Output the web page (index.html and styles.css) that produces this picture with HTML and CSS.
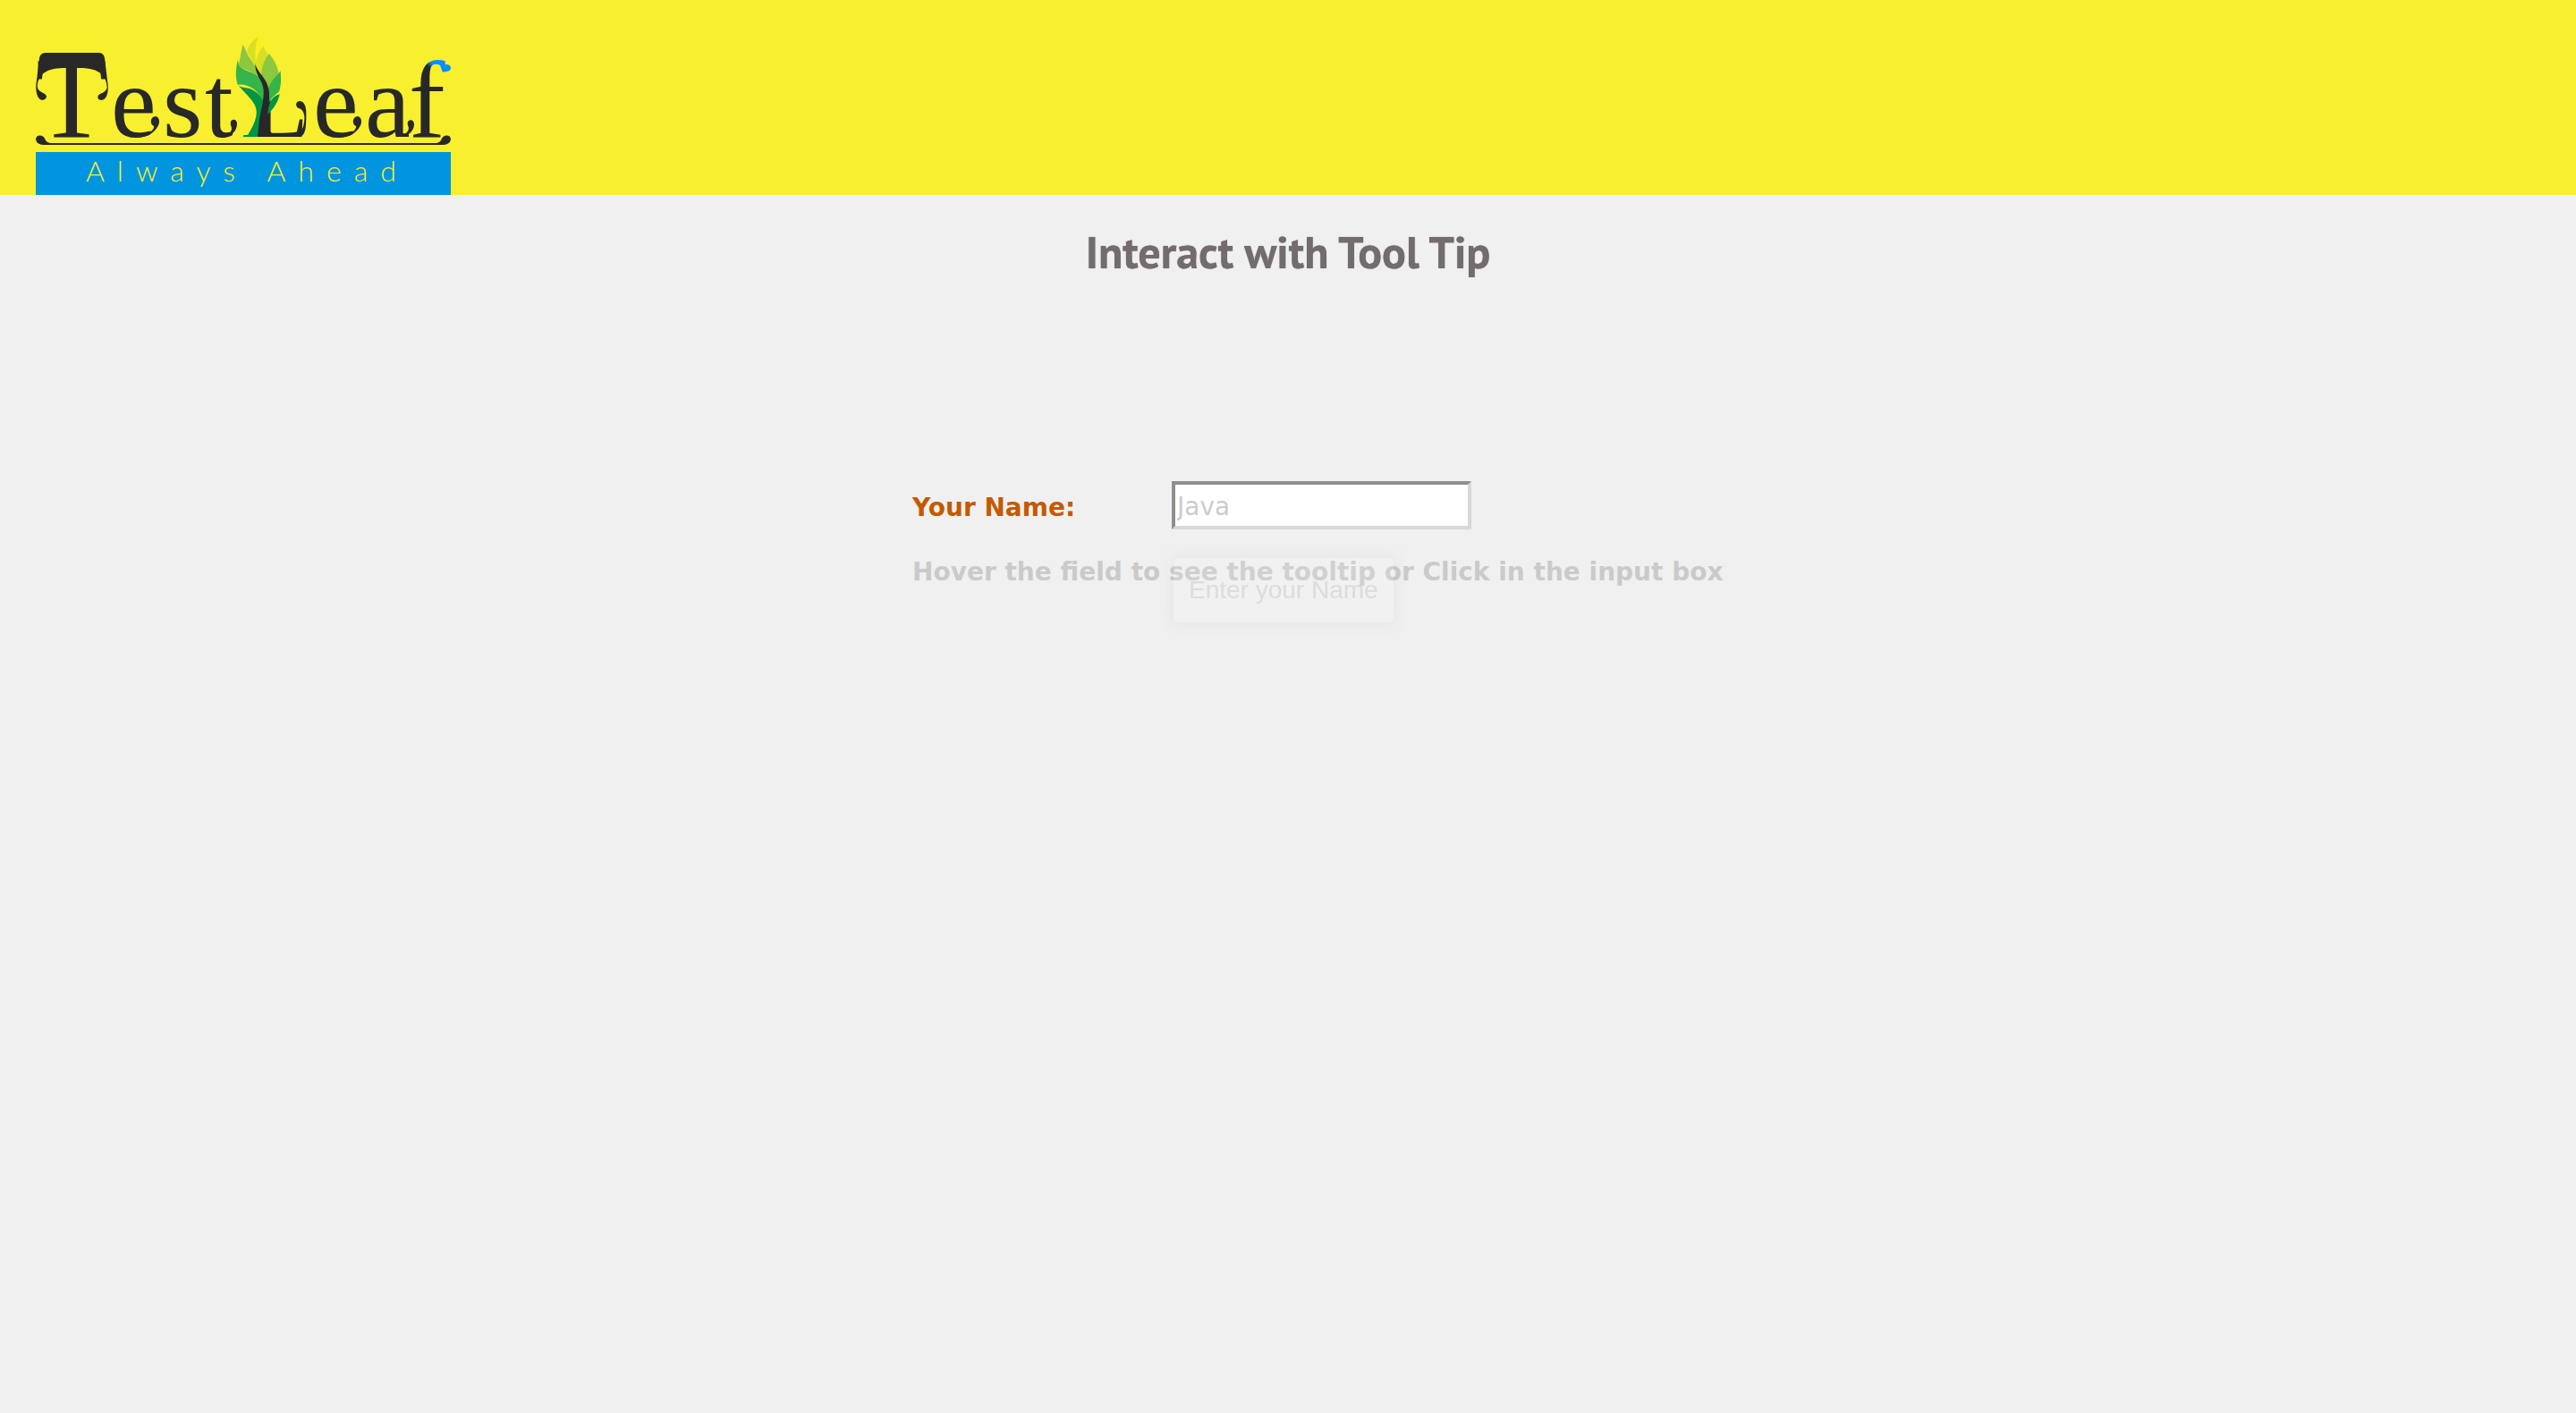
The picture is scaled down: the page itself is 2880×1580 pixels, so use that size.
FILE: index.html
```html
<!DOCTYPE html>
<html lang="en">
<head>
<meta charset="utf-8">
<title>Interact with Tool Tip</title>
<link rel="stylesheet" href="styles.css">
</head>
<body>
<header class="banner">
  <svg class="logo" viewBox="40 42 464 176" role="img" aria-label="TestLeaf, Always Ahead">
    <defs>
      <linearGradient id="tip" gradientUnits="userSpaceOnUse" x1="484" y1="80" x2="488" y2="76">
        <stop offset="0" stop-color="#282828"/>
        <stop offset="1" stop-color="#0090ff"/>
      </linearGradient>
    </defs>
    <g class="wordmark">
      <text class="initial" x="80" y="153" text-anchor="middle">T</text>
      <text x="124" y="153">e</text>
      <text x="182" y="153">s</text>
      <text x="229" y="153">t</text>
      <text class="leaf-l" x="281" y="153">L</text>
      <text x="350" y="153">e</text>
      <text x="408" y="153">a</text>
      <text class="leaf-f" x="457" y="153" fill="url(#tip)">f</text>
    </g>
    <!-- canopy and curls over the initial -->
    <path class="ink" transform="translate(30 40) scale(.3333)" d="M62 57H243Q258 58 261 75L272 165C274 190 268 216 250 216C240 216 236 208 239 202C242 192 262 195 269 175C268 135 245 106 171 108H132C70 108 38 125 35 170C38 192 60 188 66 202C66 210 60 216 51 216C35 212 30 190 31 165L42 75Q45 58 62 57z"/>
    <!-- ball ends of the letters -->
    <g class="ink">
      <path d="M150 152C164 152 173 146 172 141C167 139 168 130 174 130C179 131 179 138 176 142C172 149 163 155 150 153z"/>
      <path d="M376 152C390 152 399 146 398 141C393 139 394 130 400 130C405 131 405 138 402 142C398 149 389 155 376 153z"/>
      <path d="M246 152C257 151 261 146 258 140C256 132 265 132 265 138C265 146 259 154 248 153z"/>
      <path d="M444 152C454 151 459 146 456 140C454 133 463 132 463 139C463 146 456 154 446 153z"/>
    </g>
    <!-- tree -->
    <g transform="translate(240 30) scale(.3333)">
      <path fill="#009444" d="M73 186C90 215 134 245 139 275C146 310 120 345 112 362L96 364V369H146L163 280L164 250C155 225 125 205 100 204C85 202 76 196 73 186z"/>
      <path fill="#35b44a" d="M78 109C68 150 71 180 78 194C110 190 145 210 163 250L170 220C168 185 150 160 115 150C95 143 78 135 78 109z"/>
      <path fill="#8dc63f" d="M94 60C88 85 86 105 80 130C95 145 130 147 155 175C146 150 135 130 125 115C108 95 104 72 94 60z"/>
      <path fill="#fcee21" d="M146 34C130 70 134 100 138 115C145 90 170 75 166 60C164 50 166 45 164 36z"/>
      <path fill="#d7df23" d="M147 33C120 50 110 70 109 85C118 102 128 115 137 128C136 90 134 60 147 33z"/>
      <path fill="#d7df23" d="M164 65C150 80 138 105 138 125C142 145 150 150 158 160C165 125 182 120 181 105C180 85 168 80 164 65z"/>
      <path fill="#8dc63f" d="M182 90C165 115 155 140 157 165C160 185 172 195 181 210C190 180 214 165 214 155C211 130 198 108 182 90z"/>
      <path fill="#35b44a" d="M221 148C200 175 180 190 180 215L182 255C190 235 210 225 217 215C225 190 222 165 221 148z"/>
      <path fill="#009444" d="M218 226C195 232 184 250 180 275L177 294C200 275 215 245 218 226z"/>
      <path class="ink" d="M136 120C140 155 185 175 183 230C183 265 176 280 174 305C174 335 185 355 205 366L144 369L150 310C158 270 168 230 163 205C158 175 134 160 136 120z"/>
      <path class="ink" d="M250 364C290 362 302 340 301 300C298 278 288 274 279 272C270 263 272 251 284 249C300 249 308 265 307 295C307 345 304 369 280 369H250z"/>
    </g>
    <ellipse class="drop" cx="499" cy="76" rx="5" ry="4"/>
    <!-- ground line -->
    <path class="ink" d="M40 156C40 150 49 150 51 157Q53 160 56 160H488Q491 160 493 157C495 150 504 150 504 156Q503 162 494 162H50Q41 162 40 156z"/>
    <rect class="strap" x="40" y="170" width="464" height="48"/>
    <text class="tagline" x="96" y="203">Always Ahead</text>
  </svg>
</header>
<main class="page">
  <h1 class="title">Interact with Tool Tip</h1>
  <form class="form">
    <label class="label" for="name">Your Name:</label>
    <div class="field">
      <input class="input" id="name" type="text" placeholder="Java" aria-describedby="name-tip">
      <div class="tooltip" id="name-tip" role="tooltip">Enter your Name</div>
    </div>
    <p class="hint">Hover the field to see the tooltip or Click in the input box</p>
  </form>
</main>
</body>
</html>
```
FILE: styles.css
```css
* { box-sizing: border-box; }

html { background: #f0f0f0; }

body {
  min-height: 100vh;
  margin: 0;
  background: #f0f0f0;
  font-family: Verdana, "DejaVu Sans", sans-serif;
  font-size: 28px;
}

.banner {
  padding: 42px 40px 0;
  background: #f8ef2f;
}

.logo {
  display: block;
  width: 464px;
  height: 176px;
  overflow: visible;
}

.wordmark {
  font-family: "Liberation Serif", serif;
  font-size: 114px;
  fill: #282828;
}

.initial { font-size: 130px; }
.leaf-l { font-size: 104px; }
.leaf-f { font-size: 122px; }
.ink { fill: #282828; }
.drop { fill: #0090ff; }
.strap { fill: #0095de; }

.tagline {
  font-family: Lato, sans-serif;
  font-size: 32px;
  font-weight: 300;
  letter-spacing: 14px;
  fill: #f8ef2f;
}

.title {
  margin: 0;
  padding-top: 32px;
  color: #736c6c;
  font-family: "PT Sans", Lato, sans-serif;
  font-size: 50px;
  font-weight: 700;
  line-height: 64px;
  text-align: center;
  text-shadow: 0 0 1px #736c6c;
}

.form {
  display: grid;
  grid-template-columns: 290px 1fr;
  align-items: center;
  row-gap: 30px;
  max-width: 840px;
  min-height: 180px;
  align-content: start;
  margin: 224px auto 0;
}

.label {
  padding-top: 4px;
  color: #c45a00;
  font-weight: 700;
}

.field { position: relative; }

.input {
  display: block;
  width: 335px;
  height: 54px;
  padding: 4px 2px 2px;
  border: 4px solid;
  border-color: #8f8f8f #d9d9d9 #d9d9d9 #8f8f8f;
  background: #fff;
  font: inherit;
}

.input::placeholder { color: #ccc; }

.hint {
  grid-column: 1 / -1;
  margin: 0;
  color: #cacaca;
  font-weight: 700;
  line-height: 36px;
  white-space: nowrap;
}

.tooltip {
  position: absolute;
  top: 86px;
  left: 2px;
  z-index: 1;
  height: 72px;
  padding: 0 17px;
  border-radius: 4px;
  background: #f8f8f8;
  box-shadow: 0 0 14px #999;
  color: #666;
  font-family: "Liberation Sans", Arial, sans-serif;
  font-size: 28px;
  line-height: 72px;
  white-space: nowrap;
  opacity: .14;
}
```
